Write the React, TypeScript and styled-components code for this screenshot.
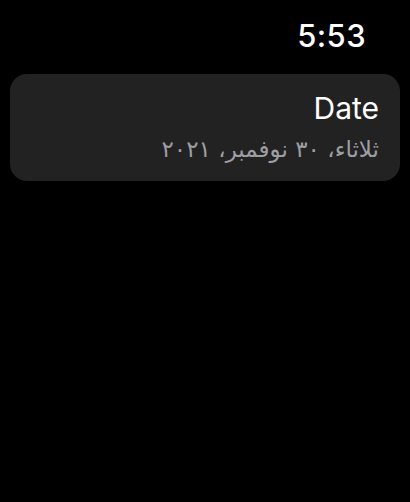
import React from 'react';
import styled, { createGlobalStyle } from 'styled-components';

const GlobalStyle = createGlobalStyle`
  html, body {
    margin: 0;
    padding: 0;
    background: #000;
  }
  body {
    font-family: Inter, "Liberation Sans", sans-serif;
  }
`;

const Screen = styled.div`
  box-sizing: border-box;
  width: 410px;
  height: 502px;
  background: #000;
  padding: 0 10px;
  display: flex;
  flex-direction: column;
`;

const StatusBar = styled.div`
  display: flex;
  justify-content: flex-end;
  align-items: center;
  height: 74px;
  padding-right: 34px;
  box-sizing: border-box;
`;

const Clock = styled.span`
  color: #fff;
  font-size: 31px;
  font-weight: 500;
  letter-spacing: 0.4px;
  margin-top: -3px;
`;

const Card = styled.div`
  box-sizing: border-box;
  height: 107px;
  background: #222222;
  border-radius: 17px;
  padding: 16px 21px 0 21px;
  display: flex;
  flex-direction: column;
  align-items: flex-end;
`;

const Title = styled.div`
  color: #fff;
  font-size: 30px;
  font-weight: 400;
  line-height: 36px;
`;

const Subtitle = styled.div<{ $dir?: 'rtl' | 'ltr' }>`
  color: #9e9ea5;
  font-family: "DejaVu Sans", "Noto Sans", sans-serif;
  font-size: 23px;
  line-height: 36px;
  margin-top: 5px;
  direction: ${(p) => p.$dir || 'ltr'};
`;

export default function App(): JSX.Element {
  return (
    <Screen>
      <GlobalStyle />
      <StatusBar>
        <Clock>5:53</Clock>
      </StatusBar>
      <Card>
        <Title>Date</Title>
        <Subtitle $dir="rtl">ثلاثاء، ٣٠ نوفمبر، ٢٠٢١</Subtitle>
      </Card>
    </Screen>
  );
}
